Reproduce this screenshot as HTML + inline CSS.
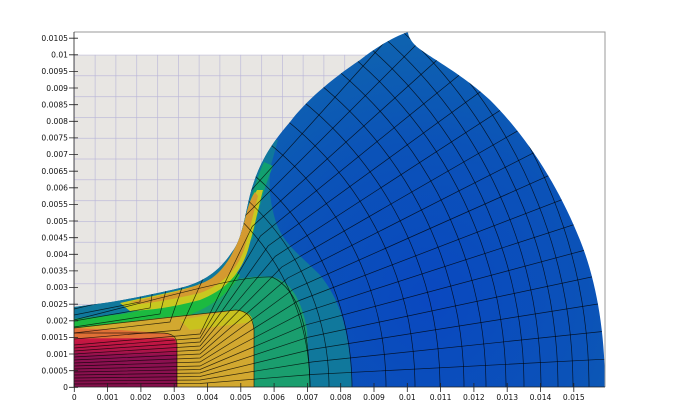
<!DOCTYPE html>
<html><head><meta charset="utf-8"><style>
html,body{margin:0;padding:0;background:#fff;width:686px;height:417px;overflow:hidden}
svg{display:block;overflow:hidden}
text{font-family:"DejaVu Sans","Liberation Sans",sans-serif;font-size:7.6px;fill:#111}
</style></head><body>
<svg width="686" height="417" viewBox="0 0 686 417">
<defs>
<pattern id="grid" x="74" y="54.7" width="20.8" height="20.8" patternUnits="userSpaceOnUse">
<rect width="20.8" height="20.8" fill="#e8e6e3"/>
<path d="M0 0H20.8M0 0V20.8" stroke="#b7b3d8" stroke-width="1.2" fill="none"/>
</pattern>
<radialGradient id="blue" cx="430" cy="300" r="260" gradientUnits="userSpaceOnUse">
<stop offset="0" stop-color="#0a48c0"/><stop offset="0.6" stop-color="#0b52b8"/><stop offset="1" stop-color="#0e62b0"/>
</radialGradient>
<linearGradient id="mar" x1="0" y1="328" x2="0" y2="387" gradientUnits="userSpaceOnUse">
<stop offset="0" stop-color="#e07036"/><stop offset="0.17" stop-color="#e07036"/><stop offset="0.18" stop-color="#cc1840"/><stop offset="0.38" stop-color="#b01448"/><stop offset="0.48" stop-color="#8c1050"/><stop offset="1" stop-color="#86104c"/>
</linearGradient>
<clipPath id="shape"><path d="M74 387 L605 387 C605 330 596 280 580 240 C560 190 530 140 490 100 C460 72 425 55 415 45 C410 40 408 35 408 32 C395 36 375 48 360 60 C330 80 305 102 290 122 C270 145 258 165 250 195 C245 215 242 240 232 252 C220 270 205 282 180 288 C150 295 120 301 97 304 L74 307 Z"/></clipPath>
</defs>
<rect x="74" y="54.7" width="333" height="332.6" fill="url(#grid)"/>
<g clip-path="url(#shape)">
<rect x="60" y="20" width="560" height="380" fill="url(#blue)"/>
<path d="M60 387 L352 387 C350 330 340 300 320 275 C300 255 285 245 277 225 C270 205 268 185 271 165 L278 140 L60 140 Z" fill="#10789c"/>
<path d="M60 320 L120 314 C160 305 200 290 230 281 C250 276 262 276 272 277 C290 280 302 300 307 330 L310 387 L60 387 Z" fill="#1a9e6e"/>
<path d="M242 230 C250 200 258 175 264 162 L273 166 C265 185 258 210 252 240 Z" fill="#12a070"/>
<path d="M74 328 L74 320 L130 313 L200 296 L190 318 Z" fill="#1cba40"/>
<path d="M74 328 L120 322 C170 314 210 302 232 270 L240 275 C225 300 200 312 180 318 Z" fill="#1cba40"/>
<path d="M120 303 C150 296 190 290 210 280 C230 268 240 245 246 220 C250 205 254 195 257 190 L263 190 C259 205 255 225 248 250 C240 275 225 290 200 300 C170 308 150 310 130 311 Z" fill="#c8c820"/>
<path d="M130 302 C160 296 195 289 212 278 C230 265 240 240 246 215 C249 203 252 196 255 192 L258 196 C254 210 250 230 244 250 C236 272 220 286 200 293 C170 300 150 303 140 304 Z" fill="#d49a30"/>
<path d="M60 387 L254 387 L254 330 C253 318 248 311 236 310 L160 318 L74 328 L60 328 Z" fill="#d2a830"/>
<path d="M180 320 L236 310 C248 311 252 316 253 322 L190 330 Z" fill="#c9c21e"/>
<path d="M60 387 L177 387 L177 348 C177 338 172 333 160 333 L120 330 L74 328 L60 328 Z" fill="url(#mar)"/>
<g stroke="#000" stroke-opacity="0.75" stroke-width="0.7" fill="none">
<circle cx="74" cy="387" r="278"/><circle cx="74" cy="387" r="312"/><circle cx="74" cy="387" r="341"/><circle cx="74" cy="387" r="366"/><circle cx="74" cy="387" r="390"/><circle cx="74" cy="387" r="412"/><circle cx="74" cy="387" r="432"/><circle cx="74" cy="387" r="450"/><circle cx="74" cy="387" r="467"/><circle cx="74" cy="387" r="484"/><circle cx="74" cy="387" r="499"/><circle cx="74" cy="387" r="515"/>
<circle cx="74" cy="387" r="236"/><circle cx="74" cy="387" r="255"/>
<path d="M74 381 L200 380 L312.7 361.9 L630.9 328.5"/>
<path d="M74 375 L200 373 L308.7 337.1 L621.7 270.6"/>
<path d="M74 369 L200 366 L302.3 312.8 L606.6 214"/>
<path d="M74 363 L200 358 L293.2 289.4 L585.6 159.2"/>
<path d="M74 357 L200 350 L281.8 267 L559 107"/>
<path d="M74 351 L200 342 L268.2 245.9 L527 57.8"/>
<path d="M74 345 L200 334 L252.3 226.4 L490.1 12.3"/>
<path d="M74 339 L180 330 L234.6 208.7 L448.7 -29"/>
<path d="M74 333 L170 322 L215.1 192.8 L403.2 -66"/>
<path d="M74 327 L160 314 L194 179.2 L354 -98"/>
<path d="M74 321 L150 308 L171.6 167.8 L301.8 -124.6"/>
<path d="M74 315 L140 302 L150 150 L250 -140"/>
<path d="M74 309 L130 296 L130 140 L200 -150"/>
<path d="M74 384 L200 383.5 L313.7 374.4 L633.2 357.7"/>
<path d="M74 378 L200 376.5 L311 349.5 L627.1 299.4"/>
<path d="M74 372 L200 369.5 L305.8 324.9 L614.9 242.1"/>
<path d="M74 366 L200 362 L298.1 301 L596.8 186.3"/>
<path d="M74 360 L200 354 L287.8 278 L573 132.8"/>
<path d="M74 354 L200 346 L275.3 256.3 L543.7 82"/>
<path d="M74 348 L200 338 L260.5 236 L509.2 34.6"/>
<path d="M243.7 217.3 L470 -9"/>
<path d="M225 200.5 L426.4 -48.2"/>
<path d="M204.7 185.7 L379 -82.7"/>
<path d="M183 173.2 L328.2 -112"/>
<path d="M177 387 L177 345 C177 336 172 333 160 333 L74 333"/>
<path d="M254 387 L254 330 C253 318 248 311 236 310 L74 328"/>
<path d="M310 387 C309 330 300 290 272 277 C240 276 200 288 74 320"/>
</g>
</g>
<path d="M74 32 H605 V387" fill="none" stroke="#9a9a9a" stroke-width="1"/>
<path d="M74 32 V387 H605" fill="none" stroke="#222" stroke-width="0.8"/>
<g stroke="#222" stroke-width="0.8">
<path d="M69 387.3H78M69 370.7H78M69 354H78M69 337.4H78M69 320.8H78M69 304.2H78M69 287.5H78M69 270.9H78M69 254.3H78M69 237.7H78M69 221H78M69 204.4H78M69 187.8H78M69 171.2H78M69 154.5H78M69 137.9H78M69 121.3H78M69 104.7H78M69 88H78M69 71.4H78M69 54.8H78M69 38.2H78"/>
<path d="M74.3 383V392M107.6 383V392M140.9 383V392M174.2 383V392M207.5 383V392M240.8 383V392M274.1 383V392M307.4 383V392M340.7 383V392M374 383V392M407.3 383V392M440.6 383V392M473.9 383V392M507.2 383V392M540.5 383V392M573.8 383V392"/>
</g>
<g text-anchor="end">
<text x="68" y="390">0</text><text x="68" y="373.5">0.0005</text><text x="68" y="357">0.001</text><text x="68" y="340">0.0015</text><text x="68" y="323.5">0.002</text><text x="68" y="307">0.0025</text><text x="68" y="290">0.003</text><text x="68" y="273.5">0.0035</text><text x="68" y="257">0.004</text><text x="68" y="240.5">0.0045</text><text x="68" y="224">0.005</text><text x="68" y="207">0.0055</text><text x="68" y="190.5">0.006</text><text x="68" y="174">0.0065</text><text x="68" y="157">0.007</text><text x="68" y="140.5">0.0075</text><text x="68" y="124">0.008</text><text x="68" y="107.5">0.0085</text><text x="68" y="91">0.009</text><text x="68" y="74">0.0095</text><text x="68" y="57.5">0.01</text><text x="68" y="41">0.0105</text>
</g>
<g text-anchor="middle">
<text x="74.3" y="400">0</text><text x="107.6" y="400">0.001</text><text x="140.9" y="400">0.002</text><text x="174.2" y="400">0.003</text><text x="207.5" y="400">0.004</text><text x="240.8" y="400">0.005</text><text x="274.1" y="400">0.006</text><text x="307.4" y="400">0.007</text><text x="340.7" y="400">0.008</text><text x="374" y="400">0.009</text><text x="407.3" y="400">0.01</text><text x="440.6" y="400">0.011</text><text x="473.9" y="400">0.012</text><text x="507.2" y="400">0.013</text><text x="540.5" y="400">0.014</text><text x="573.8" y="400">0.015</text>
</g>
</svg>
</body></html>
